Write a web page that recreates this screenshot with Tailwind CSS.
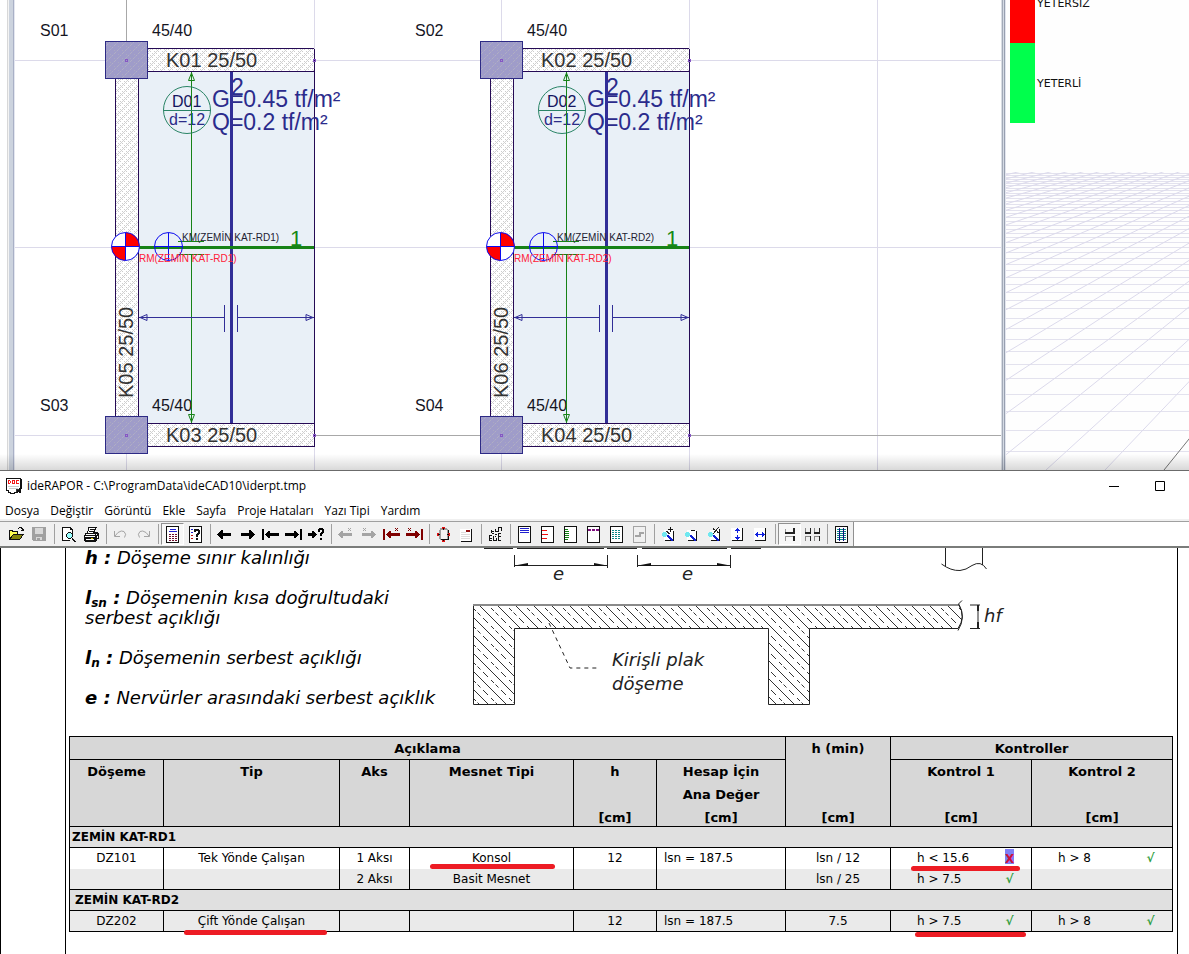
<!DOCTYPE html>
<html lang="tr">
<head>
<meta charset="utf-8">
<meta name="viewport" content="width=device-width, initial-scale=1">
<title>ideRAPOR - C:\ProgramData\ideCAD10\iderpt.tmp</title>
<script src="https://cdn.jsdelivr.net/npm/@tailwindcss/browser@4"></script>
</head>
<body class="flex min-h-screen flex-col overflow-x-hidden bg-white text-black">

<!-- CAD workspace: plan view and 3D view -->
<section class="relative flex h-[471px] shrink-0 border-b border-[#6b6b6b] bg-white" aria-label="ideCAD">
  <div class="flex w-[15px] shrink-0 pl-[7px]">
    <div class="w-px bg-[#d8d8d8]"></div>
    <div class="w-px bg-[#f4f4f4]"></div>
    <div class="w-1 bg-[#ccd3de]"></div>
    <div class="w-px bg-[#a9b0c6]"></div>
    <div class="w-px bg-[#e4e7f0]"></div>
  </div>

  <svg class="h-full min-w-0 flex-1 font-['Liberation_Sans',Arial,sans-serif]" role="img" aria-label="Kat planı">
    <defs>
      <pattern id="beam" width="16" height="16" patternUnits="userSpaceOnUse">
        <rect width="16" height="16" fill="#fff"/>
        <path d="M-1 9L9 -1M-1 17L17 -1M7 17L17 7" stroke="#d2d2d2" fill="none"/>
        <path d="M0 1.500h16M0 5.500h16M0 9.500h16M0 13.500h16" stroke="#cdcdcd" stroke-dasharray="1 3"/>
        <path d="M2 3.500h14M2 7.500h14M2 11.500h14M2 15.500h14" stroke="#cdcdcd" stroke-dasharray="1 3"/>
      </pattern>
      <pattern id="column" width="8" height="8" patternUnits="userSpaceOnUse">
        <rect width="8" height="8" fill="#9f9cc9"/>
        <path d="M-1 9L9 -1" stroke="#b0aec4" stroke-width="1" stroke-dasharray="3 1"/>
        <path d="M2 2.500h1M6 6.500h1" stroke="#aaa8c0"/>
      </pattern>
      <g id="unit">
        <rect x="139" y="72" width="175" height="351" fill="#e9f0f7"/>
        <g shape-rendering="crispEdges">
          <rect x="115" y="72" width="24" height="350" fill="url(#beam)"/>
          <rect x="140" y="48" width="174" height="24" fill="url(#beam)"/>
          <rect x="140" y="423" width="174" height="24" fill="url(#beam)"/>
          <path d="M115.500 78V418M138.500 71.500V423.500M147 48.500H314M138 71.500H314M138 423.500H314M147 446.500H315M314.500 49V447" stroke="#250a55" fill="none"/>
          <path d="M105.500 41.500h42v37h-42zM105.500 416.500h42v37h-42z" fill="url(#column)" stroke="#2d2a85"/>
          <path d="M125.500 59.500h2v2h-2zM313.500 59.500h2v2h-2zM125.500 434.500h2v2h-2zM313.500 434.500h2v2h-2z" fill="none" stroke="#8656c4"/>
        </g>
      </g>
      <g id="marks">
        <g shape-rendering="crispEdges" fill="none">
          <path d="M231.500 72V423" stroke="#312e97" stroke-width="3"/>
          <path d="M191.500 72V241.500M178 241.500H204M178 254.500H204M191.500 254.500V423" stroke="#178217"/>
          <path d="M139 247.500H314" stroke="#178217" stroke-width="3"/>
          <path d="M139 317.500H224M224.500 305V332M237.500 305V332M238 317.500H314" stroke="#312e97"/>
        </g>
        <path d="M191.500 73L188.500 80.500H194.500ZM191.500 422L188.500 414.500H194.500Z" fill="none" stroke="#178217"/>
        <path d="M140 317.500L147 314.500V320.500ZM313 317.500L306 314.500V320.500Z" fill="none" stroke="#312e97"/>
        <circle cx="187" cy="110" r="23.500" fill="none" stroke="#2a8466"/>
        <path d="M163.500 110.500H210.500" stroke="#2a8466" shape-rendering="crispEdges"/>
        <path d="M125.500 246.500V232.500A14 14 0 0 1 139.500 246.500ZM125.500 246.500V260.500A14 14 0 0 1 111.500 246.500Z" fill="#f00"/>
        <path d="M125.500 246.500H111.500A14 14 0 0 1 125.500 232.500ZM125.500 246.500H139.500A14 14 0 0 1 125.500 260.500Z" fill="#fff"/>
        <path d="M111.500 246.500H139.500M125.500 232.500V260.500M154 246.500H183M168.500 232.500V260.500" stroke="#0a0af0"/>
        <circle cx="125.500" cy="246.500" r="14" fill="none" stroke="#0a0af0"/>
        <circle cx="168.500" cy="246.500" r="14" fill="none" stroke="#0a0af0"/>
      </g>
    </defs>

    <g transform="translate(-15 0)">
      <g shape-rendering="crispEdges" stroke="#dcdaea">
        <path d="M126.500 0V470M314.500 0V470M501.500 0V470M689.500 0V470M877.500 0V470M15 60.500H4000M15 247.500H4000M15 435.500H4000"/>
        <path d="M126.500 0V42M314 435.500H4000" stroke="#a8a8a8"/>
      </g>
      <use href="#unit"/>
      <use href="#unit" x="375"/>

      <g fill="#15151f" font-size="16">
        <text x="40" y="36">S01</text><text x="152" y="36">45/40</text>
        <text x="415" y="36">S02</text><text x="527" y="36">45/40</text>
        <text x="40" y="411">S03</text><text x="152" y="411">45/40</text>
        <text x="415" y="411">S04</text><text x="527" y="411">45/40</text>
      </g>
      <g fill="#333" font-size="20">
        <text x="166" y="67">K01 25/50</text><text x="541" y="67">K02 25/50</text>
        <text x="166" y="442">K03 25/50</text><text x="541" y="442">K04 25/50</text>
        <text transform="translate(133 398) rotate(-90)">K05 25/50</text>
        <text transform="translate(508 398) rotate(-90)">K06 25/50</text>
      </g>
      <g fill="#15155f" font-size="16">
        <text x="172" y="107">D01</text><text x="547" y="107">D02</text>
        <text x="169" y="125" fill="#2c2c88">d=12</text><text x="544" y="125" fill="#2c2c88">d=12</text>
      </g>
      <g fill="#2b2b8c" font-size="23">
        <text x="212" y="107">G=0.45 tf/m²</text><text x="587" y="107">G=0.45 tf/m²</text>
        <text x="212" y="130">Q=0.2 tf/m²</text><text x="587" y="130">Q=0.2 tf/m²</text>
        <text x="231" y="95">2</text><text x="606" y="95">2</text>
      </g>
      <use href="#marks"/>
      <use href="#marks" x="375"/>
      <g fill="#178a17" font-size="22">
        <text x="290" y="246">1</text><text x="666" y="246">1</text>
      </g>
      <g fill="#222233" font-size="10">
        <text x="182" y="241">KM(ZEMİN KAT-RD1)</text><text x="557" y="241">KM(ZEMİN KAT-RD2)</text>
      </g>
      <g fill="#ff2038" font-size="10">
        <text x="139" y="262">RM(ZEMİN KAT-RD1)</text><text x="514" y="262">RM(ZEMİN KAT-RD2)</text>
      </g>
    </g>
  </svg>

  <div class="flex w-[5px] shrink-0" role="separator">
    <div class="w-px bg-[#d9dde4]"></div>
    <div class="w-px bg-[#a3aab8]"></div>
    <div class="w-px bg-[#d5dbe5]"></div>
    <div class="w-px bg-[#98a0b0]"></div>
    <div class="w-px bg-[#e2e5ee]"></div>
  </div>

  <svg class="h-full w-[183px] shrink-0 bg-[#fefefe] font-['DejaVu_Sans',Verdana,sans-serif]" role="img" aria-label="3B görünüm">
    <rect x="4" width="25" height="43" fill="#f00"/>
    <rect x="4" y="43" width="25" height="80" fill="#00ff4c"/>
    <text x="31" y="7" font-size="11" fill="#111">YETERSİZ</text>
    <text x="31" y="87" font-size="11" fill="#111">YETERLİ</text>
    <svg y="172" width="100%" height="299" id="floor"></svg>
  </svg>

  <div class="absolute inset-x-0 bottom-0 h-4 bg-linear-to-b from-transparent to-black/15"></div>
</section>

<!-- Report window -->
<section class="flex grow flex-col bg-white font-['Open_Sans','Noto_Sans',sans-serif] text-xs" aria-label="ideRAPOR">
  <header class="flex h-[29px] items-center justify-between pl-[6px]">
    <div class="flex items-center gap-[5px]">
      <svg class="size-4" viewBox="0 0 16 16" shape-rendering="crispEdges" aria-hidden="true">
        <path d="M0 0h15v1h1v10h-1v4h-2v-1h-1v1H9v1H4v-1H2v-2H0z" fill="#111"/>
        <path d="M1 1h13v9h-1v2h-2v2H8v1H5v-1H3v-2H1z" fill="#fff"/>
        <path d="M2 2h2v1h1v2H4v1H2zM3 3v2h1V3zM6 2h3v4H6zM7 3v2h1V3zM10 2h3v1h-2v2h2v1h-3z" fill="#f21818" fill-rule="evenodd"/>
        <path d="M2 8h11v1H2zM3 10h9v1H3z" fill="#ccc"/>
        <path d="M10 11h3v1h-2v2h-1z" fill="#333"/>
      </svg>
      <h1>ideRAPOR - C:\ProgramData\ideCAD10\iderpt.tmp</h1>
    </div>
    <div class="flex self-stretch pr-[6px]">
      <button type="button" class="flex w-[46px] items-center justify-center" aria-label="Simge durumuna küçült"><svg width="10" height="10" aria-hidden="true"><path d="M0 5.500h10" stroke="#000"/></svg></button>
      <button type="button" class="flex w-[46px] items-center justify-center" aria-label="Ekranı kapla"><svg width="10" height="10" aria-hidden="true"><path d="M.5 .5h9v9h-9z" fill="none" stroke="#000"/></svg></button>
    </div>
  </header>

  <nav class="flex h-[19px] items-center gap-[11px] pt-[3px] pl-[5px]" aria-label="Menü">
    <button type="button">Dosya</button>
    <button type="button">Değiştir</button>
    <button type="button">Görüntü</button>
    <button type="button">Ekle</button>
    <button type="button">Sayfa</button>
    <button type="button">Proje Hataları</button>
    <button type="button">Yazı Tipi</button>
    <button type="button">Yardım</button>
  </nav>

  <div class="h-[29px] shrink-0 border-b-2 border-[#7a7c7a] bg-white">
    <div class="h-[3px] border-b border-[#a0a0a0] bg-[#f0f0f0]"></div>
    <div id="toolbar" role="toolbar" aria-label="Araçlar" class="flex h-[24px] w-[854px] items-center border-r border-[#909090] bg-[#f0f0f0] pl-[5px] [&>button]:flex [&>button]:h-[22px] [&>button]:w-[23px] [&>button]:shrink-0 [&>button]:items-center [&>button]:justify-center [&>i]:mx-auto [&>i]:h-5 [&>i]:w-px [&>i]:bg-[#a0a0a0] [&_svg]:size-[17px] [&_svg]:shrink-0">
      <button type="button" aria-label="Aç"><svg viewBox="0 0 17 17" shape-rendering="crispEdges"><path d="M1 4h4v1h5v3h6v1h-1v1h-1v2h-1v1h-1v1H1z" fill="#111"/><path d="M2 5h2v1h5v2H5v1H4v1H3v1H2z" fill="#ffff50"/><path d="M5 9h9v1h-1v2h-1v1H3v-1h1v-2h1z" fill="#85850a"/><path d="M10 2h1V1h3v1h1v1h1v2h-3V4h1V3h-1V2h-2v1h-1z" fill="#111"/></svg></button>
      <button type="button" aria-label="Kaydet" disabled><svg viewBox="0 0 17 17" shape-rendering="crispEdges"><path d="M1 1h14v14H2v-1H1z" fill="#a0a0a0"/><path d="M4 2h8v6H4zM5 11h6v3H9v-2H6v2H5z" fill="#d8d8d8"/></svg></button>
      <i></i>
      <button type="button" aria-label="Baskı önizleme"><svg viewBox="0 0 17 17" shape-rendering="crispEdges"><path d="M2 1h9v1h1v1h1v5h-1V4h-2V2H3v12h7v1H2z" fill="#111"/><path d="M3 2h7v2h2v10H3z" fill="#fff"/><path d="M8 6h3v1h1v1h1v3h-1v1h-1v1H8v-1H7v-1H6V8h1V7h1z" fill="#111"/><path d="M8 7h3v1h1v3h-1v1H8v-1H7V8h1z" fill="#9ff"/><path d="M12 12h1v1h1v1h1v1h1v1h-2v-1h-1v-1h-1z" fill="#111"/></svg></button>
      <button type="button" aria-label="Yazdır"><svg viewBox="0 0 17 17" shape-rendering="crispEdges"><path d="M5 1h9v1h-1v2h-1v2h3v1h1v6h-2v2h-1v1H2v-1H1V9h1V7h2V5h1z" fill="#111"/><path d="M6 2h6v1h-1v2h-1v2H5V5h1z" fill="#fff"/><path d="M3 8h9v1H3zM2 10h10v1H2zM3 13h8v1H3zM13 8h1v1h-1zM14 10h1v2h-1z" fill="#fff"/><path d="M7 3h4v1H7zM6 5h4v1H6z" fill="#111"/><path d="M8 12h2v1H8z" fill="#e8d800"/></svg></button>
      <i></i>
      <button type="button" aria-label="Geri al" disabled><svg viewBox="0 0 17 17" fill="none" stroke="#a4a4a4"><path d="M2.500 5v5.500H8M3 10L6 6.500Q9.500 4 12 5.500Q15 8 12.500 11.500"/></svg></button>
      <button type="button" aria-label="Yinele" disabled><svg viewBox="0 0 17 17" fill="none" stroke="#a4a4a4"><path d="M14.500 5v5.500H9M14 10L11 6.500Q7.500 4 5 5.500Q2 8 4.500 11.500"/></svg></button>
      <i></i>
      <button type="button" aria-label="Sayfa düzeni" aria-pressed="true" class="border border-r-white border-b-white border-t-[#909090] border-l-[#909090] bg-[#f7f7f7]"><svg viewBox="0 0 17 17" shape-rendering="crispEdges"><path d="M2 0h13v17H2z" fill="#111"/><path d="M3 1h11v15H3z" fill="#fff"/><path d="M6 3.500h6M5 5.500h8" stroke="#2020d0"/><path d="M5 8.500h8M5 10.500h8M5 12.500h8M5 14.500h8" stroke="#701030" stroke-dasharray="2 1"/></svg></button>
      <button type="button" aria-label="Sayfa yardımı"><svg viewBox="0 0 17 17" shape-rendering="crispEdges"><path d="M2 0h13v17H2z" fill="#111"/><path d="M3 1h11v15H3z" fill="#fff"/><path d="M4 3.500h2M4 6.500h2" stroke="#2020d0"/><path d="M4 9.500h2M4 12.500h2" stroke="#c01010"/><path d="M7 3h5v1h1v4h-1v1h-1v2H9V8h1V7h1V5H9v1H7zM9 12h2v2H9z" fill="#111"/></svg></button>
      <i></i>
      <button type="button" aria-label="Önceki"><svg viewBox="0 0 17 17" shape-rendering="crispEdges"><path d="M1 8h1V7h1V6h1V5h1V4h2v3h8v3H7v3H5v-1H4v-1H3v-1H2V9H1z" fill="#000"/></svg></button>
      <button type="button" aria-label="Sonraki"><svg viewBox="0 0 17 17" shape-rendering="crispEdges"><path d="M16 8h-1V7h-1V6h-1V5h-1V4h-2v3H2v3h8v3h2v-1h1v-1h1v-1h1V9h1z" fill="#000"/></svg></button>
      <button type="button" aria-label="İlk"><svg viewBox="0 0 17 17" shape-rendering="crispEdges"><path d="M0 3h2v11H0zM3 8h1V7h1V6h1V5h2v2h9v3H8v2H6v-1H5v-1H4V9H3z" fill="#000"/></svg></button>
      <button type="button" aria-label="Son"><svg viewBox="0 0 17 17" shape-rendering="crispEdges"><path d="M15 3h2v11h-2zM14 8h-1V7h-1V6h-1V5H9v2H0v3h9v2h2v-1h1v-1h1V9h1z" fill="#000"/></svg></button>
      <button type="button" aria-label="Sayfaya git"><svg viewBox="0 0 17 17" shape-rendering="crispEdges"><path d="M9 8H8V7H7V6H6V5H4v2H0v3h4v2h2v-1h1v-1h1V9h1zM10 3h1V2h4v1h1v4h-1v1h-1v2h-2V7h1V6h1V4h-2v2h-2zM12 12h2v2h-2z" fill="#000"/></svg></button>
      <i></i>
      <button type="button" aria-label="Önceki hata" disabled><svg viewBox="0 0 17 17" shape-rendering="crispEdges"><path d="M1 8h1V7h1V6h1V5h2v2h9v3H6v2H4v-1H3v-1H2V9H1zM11 2h1v1h1V2h1v1h-1v1h1v1h-1V4h-1v1h-1V4h1V3h-1z" fill="#a4a4a4"/></svg></button>
      <button type="button" aria-label="Sonraki hata" disabled><svg viewBox="0 0 17 17" shape-rendering="crispEdges"><path d="M16 8h-1V7h-1V6h-1V5h-2v2H2v3h9v2h2v-1h1v-1h1V9h1zM3 2h1v1h1V2h1v1H5v1h1v1H5V4H4v1H3V4h1V3H3z" fill="#a4a4a4"/></svg></button>
      <button type="button" aria-label="İlk hata"><svg viewBox="0 0 17 17" shape-rendering="crispEdges"><path d="M0 3h2v11H0zM3 8h1V7h1V6h1V5h2v2h9v3H8v2H6v-1H5v-1H4V9H3zM12 2h1v1h1V2h1v1h-1v1h1v1h-1V4h-1v1h-1V4h1V3h-1z" fill="#800000"/></svg></button>
      <button type="button" aria-label="Son hata"><svg viewBox="0 0 17 17" shape-rendering="crispEdges"><path d="M15 3h2v11h-2zM14 8h-1V7h-1V6h-1V5H9v2H0v3h9v2h2v-1h1v-1h1V9h1zM2 2h1v1h1V2h1v1H4v1h1v1H4V4H3v1H2V4h1V3H2z" fill="#800000"/></svg></button>
      <i></i>
      <button type="button" aria-label="Tümünü seç"><svg viewBox="0 0 17 17" shape-rendering="crispEdges"><path d="M5 2h7v1h1v1h1v9h-1v1H5v-1H4V4h1z" fill="#a0a0a0"/><path d="M6 4h6v9H6z" fill="#f4f4f4"/><path d="M13 4h1v10H6v-1h7z" fill="#111"/><path d="M7 1h3v2H7zM7 14h3v2H7zM2 7h2v3H2zM13 7h2v3h-2z" fill="#e01010"/><path d="M8 2h1v2H8zM8 13h1v2H8zM3 8h2v1H3zM12 8h2v1h-2z" fill="#111"/></svg></button>
      <button type="button" aria-label="Sayfa numarası"><svg viewBox="0 0 17 17" shape-rendering="crispEdges"><path d="M2 3h11v12H2z" fill="#fff"/><path d="M13 3h1v13H3v-1h10z" fill="#111"/><path d="M3 6.500h5M3 8.500h9M3 10.500h9M3 12.500h9" stroke="#ddd"/><path d="M8 4h4v2H8z" fill="#901010"/></svg></button>
      <i></i>
      <button type="button" aria-label="Formül"><svg viewBox="0 0 17 17" shape-rendering="crispEdges" fill="none" stroke="#111"><path d="M2 9.500h3M2 12h3M2 14.500h3M2.500 9v6M4 4v3M4 5.500h3M6.500 7.500h-2M8.500 3V5.500h2.500V1.500h3V5M8 8.500h2M8 10.500h1M11 8v3M14 7.500h-3M14 10.500h-3v4h3M6.500 10v5M6 14.500h4M9.500 12v3"/></svg></button>
      <i></i>
      <button type="button" aria-label="Üst bilgi"><svg viewBox="0 0 17 17" shape-rendering="crispEdges"><path d="M2.500 .5h12v16h-12z" fill="#fff" stroke="#111"/><path d="M4 2.500h9M4 4.500h9M4 6.500h9" stroke="#2020d0"/></svg></button>
      <button type="button" aria-label="Sol kenar"><svg viewBox="0 0 17 17" shape-rendering="crispEdges"><path d="M2.500 .5h12v16h-12z" fill="#fff" stroke="#111"/><path d="M3 4.500h5M3 8.500h6M3 12.500h5" stroke="#f01010"/></svg></button>
      <button type="button" aria-label="Cetvel"><svg viewBox="0 0 17 17" shape-rendering="crispEdges"><path d="M2.500 .5h12v16h-12z" fill="#fff" stroke="#111"/><path d="M3 3.500h3M3 5.500h4M3 7.500h4M3 9.500h4M3 11.500h4M3 13.500h3" stroke="#108010"/></svg></button>
      <button type="button" aria-label="Sayfa sonu"><svg viewBox="0 0 17 17" shape-rendering="crispEdges"><path d="M2.500 .5h12v16h-12z" fill="#fff" stroke="#111"/><path d="M3 4h11" stroke="#801080" stroke-width="2" stroke-dasharray="3 1"/></svg></button>
      <button type="button" aria-label="Izgara"><svg viewBox="0 0 17 17" shape-rendering="crispEdges"><path d="M2.500 .5h12v16h-12z" fill="#fff" stroke="#111"/><path d="M4 4.500h9M4 6.500h9M4 8.500h9M4 10.500h9M4 12.500h9" stroke="#0b8a8a" stroke-dasharray="2 1"/></svg></button>
      <button type="button" aria-label="Grafik" disabled><svg viewBox="0 0 17 17" shape-rendering="crispEdges"><path d="M2.500 .5h12v16h-12z" fill="#f0f0f0" stroke="#a4a4a4"/><path d="M4 9h4V6h5v2h-3v3H4z" fill="#a4a4a4"/></svg></button>
      <i></i>
      <button type="button" aria-label="Yakınlaştır"><svg viewBox="0 0 17 17" shape-rendering="crispEdges"><path d="M13 5h1v10H5v-1h8z" fill="#111"/><path d="M4 4h9v10H4z" fill="#fff"/><path d="M3 6h3v1h1v3H6v1H3v-1H2V7h1z" fill="#70e8f0"/><path d="M7 9h2v1h1v1h1v1h1v1h1v2h-2v-1h-1v-1H9v-1H8v-1H7z" fill="#1020d0"/><path d="M6 5h2v1h1v1h1v1H8V7H7V6H6z" fill="#222"/><path d="M10.500 1v5M8 3.500h5" stroke="#111"/></svg></button>
      <button type="button" aria-label="Uzaklaştır"><svg viewBox="0 0 17 17" shape-rendering="crispEdges"><path d="M13 5h1v10H5v-1h8z" fill="#111"/><path d="M4 4h9v10H4z" fill="#fff"/><path d="M3 6h3v1h1v3H6v1H3v-1H2V7h1z" fill="#70e8f0"/><path d="M7 9h2v1h1v1h1v1h1v1h1v2h-2v-1h-1v-1H9v-1H8v-1H7z" fill="#1020d0"/><path d="M8 4.500h4" stroke="#111"/></svg></button>
      <button type="button" aria-label="Yüzde"><svg viewBox="0 0 17 17" shape-rendering="crispEdges"><path d="M13 3h1v12H5v-1h8z" fill="#111"/><path d="M4 4h9v10H4z" fill="#fff"/><path d="M3 6h3v1h1v3H6v1H3v-1H2V7h1z" fill="#70e8f0"/><path d="M7 9h2v1h1v1h1v1h1v1h1v2h-2v-1h-1v-1H9v-1H8v-1H7z" fill="#1020d0"/><path d="M7 8L13 1M7 3.500h2M7.500 2v2M11 6.500h2M11.500 5v2" fill="none" stroke="#222"/></svg></button>
      <button type="button" aria-label="Sayfa boyu"><svg viewBox="0 0 17 17" shape-rendering="crispEdges"><path d="M2 2h11v12H2z" fill="#fff"/><path d="M13 2h1v13H3v-1h10z" fill="#111"/><path d="M8 2h1v1h1v1h1v1H9v2H8V5H6V4h1V3h1zM8 9h1v2h2v1h-1v1H9v1H8v-1H7v-1H6v-1h2z" fill="#1020e0"/></svg></button>
      <button type="button" aria-label="Sayfa eni"><svg viewBox="0 0 17 17" shape-rendering="crispEdges"><path d="M2 2h11v12H2z" fill="#fff"/><path d="M13 2h1v13H3v-1h10z" fill="#111"/><path d="M3 8h1V7h1V6h1v2h2v1H6v2H5v-1H4V9H3zM13 8h-1V7h-1V6h-1v2H8v1h2v2h1v-1h1V9h1z" fill="#1020e0"/></svg></button>
      <i></i>
      <button type="button" aria-label="Tek sayfa" aria-pressed="true" class="border border-r-white border-b-white border-t-[#909090] border-l-[#909090] bg-[#f7f7f7]"><svg viewBox="0 0 17 17" shape-rendering="crispEdges" fill="none"><path d="M4.500 3V7M4.500 15V10.500h8" stroke="#999"/><path d="M4 7h9M13 2V8M13 10V15" stroke="#222" stroke-width="2"/></svg></button>
      <button type="button" aria-label="Çift sayfa"><svg viewBox="0 0 17 17" shape-rendering="crispEdges" fill="none"><path d="M1.500 2V7M1.500 15V10.500h5M10.500 2V7M10.500 15V10.500h5" stroke="#888"/><path d="M1 7h6M10 7h6" stroke="#222" stroke-width="2"/><path d="M6.500 2V7M6.500 10V15M15.500 2V7M15.500 10V15" stroke="#222"/></svg></button>
      <i></i>
      <button type="button" aria-label="Tablo"><svg viewBox="0 0 17 17" shape-rendering="crispEdges"><path d="M2.500 .5h12v16h-12z" fill="#fff" stroke="#111"/><path d="M4 3.500h9M4 5.500h9M4 7.500h9M4 9.500h9M4 11.500h9M4 13.500h9" stroke="#0b8a8a"/><path d="M6.500 2v13M10.500 2v13" stroke="#101080"/></svg></button>
    </div>
  </div>

  <main class="flex grow border-l border-black bg-white pr-[11px] pl-[64px] font-['DejaVu_Sans',Verdana,sans-serif]">
    <article class="min-w-0 grow border-x border-black pr-[4px] pl-[3px]">
      <div class="flex h-[188px] overflow-hidden">
        <div class="w-[397px] shrink-0 pl-[16px] text-[18px] leading-5 italic">
          <p><b>h :</b> Döşeme sınır kalınlığı</p>
          <p class="mt-5"><b>l<sub class="text-xs">sn</sub> :</b> Döşemenin kısa doğrultudaki<br>serbest açıklığı</p>
          <p class="mt-5"><b>l<sub class="text-xs">n</sub> :</b> Döşemenin serbest açıklığı</p>
          <p class="mt-5 whitespace-nowrap"><b>e :</b> Nervürler arasındaki serbest açıklık</p>
        </div>

        <svg class="h-full min-w-0 grow" role="img" aria-label="Kirişli plak döşeme kesiti">
          <defs>
            <pattern id="hatch" width="18" height="18" patternUnits="userSpaceOnUse">
              <path d="M-1 -1L19 19" stroke="#333" fill="none"/>
              <path d="M9.500 .5l3 3M15 6l3 3M0 9l2 2M5 14l3 3" stroke="#333" fill="none"/>
            </pattern>
          </defs>
          <g transform="translate(-466 -548)" fill="none" stroke="#222">
            <path d="M484 548.500H513M517 548.500H604M607 548.500H637M642 548.500H727M731 548.500H761"/>
            <path d="M514.500 555V567M607.500 555V568M514 565.500H607M637.500 555V567M730.500 555V568M638 565.500H730"/>
            <path d="M515 565.500L528 563V566ZM607 565.500L594 563V566ZM638 565.500L651 563V566ZM730 565.500L717 563V566Z" fill="#111" stroke="none"/>
            <path d="M945.500 548V566M982.500 548V565M941.500 564Q951 571 960 570.500Q966 570 972 565.500Q981 560 986.500 569"/>
            <path d="M473.500 604.500H959Q966 617 958 628.500H809.500V704.500H768.500V628.500H514.500V704.500H473.500Z" fill="url(#hatch)"/>
            <path d="M473 605H959" stroke="#8a8a8a" stroke-width="2"/>
            <path d="M962 600.500L958.500 604Q966.500 617 958 630.500"/>
            <path d="M549 623L570 668H600" stroke-dasharray="4 4"/>
            <path d="M970 605H980M970 628.500H980M978 605V628" stroke="#222"/>
            <path d="M978 605V611M978 622V628" stroke-width="2"/>
            <g fill="#222" stroke="none" font-size="18" font-style="italic">
              <text x="553" y="580">e</text><text x="682" y="580">e</text>
              <text x="612" y="666">Kirişli plak</text><text x="612" y="690">döşeme</text>
              <text x="984" y="622">hf</text>
            </g>
          </g>
        </svg>
      </div>

      <table class="w-full table-fixed border-collapse border border-black text-center text-xs [&_tbody_td]:h-[21px] [&_td]:border-x [&_td]:border-black [&_td]:p-0 [&_th]:border [&_th]:border-black [&_th]:p-0 [&_thead_th]:align-top [&_thead_th]:text-[13px] [&_thead_th]:leading-[23px]">
        <colgroup>
          <col class="w-[94px]"><col class="w-[176px]"><col class="w-[70px]"><col class="w-[164px]"><col class="w-[83px]"><col class="w-[129px]"><col class="w-[105px]"><col class="w-[141px]"><col class="w-[141px]">
        </colgroup>
        <thead class="bg-[#d7d7d7]">
          <tr>
            <th colspan="6" scope="colgroup"><div class="h-[22px]">Açıklama</div></th>
            <th rowspan="2" scope="col"><div class="h-[89px]">h (min)<br><br><br>[cm]</div></th>
            <th colspan="2" scope="colgroup"><div class="h-[22px]">Kontroller</div></th>
          </tr>
          <tr>
            <th scope="col"><div class="h-[66px]">Döşeme</div></th>
            <th scope="col">Tip</th>
            <th scope="col">Aks</th>
            <th scope="col">Mesnet Tipi</th>
            <th scope="col"><div class="h-[66px]">h<br><br>[cm]</div></th>
            <th scope="col"><div class="h-[66px]">Hesap İçin<br>Ana Değer<br>[cm]</div></th>
            <th scope="col"><div class="h-[66px]">Kontrol 1<br><br>[cm]</div></th>
            <th scope="col"><div class="h-[66px]">Kontrol 2<br><br>[cm]</div></th>
          </tr>
        </thead>
        <tbody>
          <tr class="bg-[#e0e0e0]"><th colspan="9" scope="rowgroup" class="text-left"><div class="h-5 pl-[2px] leading-5">ZEMİN KAT-RD1</div></th></tr>
          <tr>
            <td>DZ101</td><td>Tek Yönde Çalışan</td><td>1 Aksı</td>
            <td class="relative">Konsol<span class="absolute top-[16px] left-5 h-[5px] w-[125px] rounded-full bg-[#ed1c24]"></span></td>
            <td>12</td><td><div class="pl-[7px] text-left">lsn = 187.5</div></td><td>lsn / 12</td>
            <td class="relative"><div class="flex items-center justify-between pr-[17px] pl-[26px]"><span>h &lt; 15.6</span><span class="mb-1 h-[15px] w-[9px] bg-[#7f7ff5] leading-[20px] font-bold text-[#d0103a]">X</span></div><span class="absolute top-[18px] left-5 h-[5px] w-[109px] rounded-full bg-[#ed1c24]"></span></td>
            <td><div class="flex justify-between pr-[17px] pl-[26px]"><span>h &gt; 8</span><span class="w-[9px] font-bold text-[#2e9e3c]">√</span></div></td>
          </tr>
          <tr class="bg-[#eaeaea]">
            <td></td><td></td><td>2 Aksı</td><td>Basit Mesnet</td><td></td><td></td><td>lsn / 25</td>
            <td><div class="flex justify-between pr-[17px] pl-[26px]"><span>h &gt; 7.5</span><span class="w-[9px] font-bold text-[#2e9e3c]">√</span></div></td><td></td>
          </tr>
        </tbody>
        <tbody>
          <tr class="bg-[#e0e0e0]"><th colspan="9" scope="rowgroup" class="text-left"><div class="h-5 pl-[5px] leading-5">ZEMİN KAT-RD2</div></th></tr>
          <tr class="bg-[#eaeaea]">
            <td>DZ202</td>
            <td class="relative">Çift Yönde Çalışan<span class="absolute top-[19px] left-5 h-[5px] w-[143px] rounded-full bg-[#ed1c24]"></span></td>
            <td></td><td></td><td>12</td><td><div class="pl-[7px] text-left">lsn = 187.5</div></td><td>7.5</td>
            <td class="relative"><div class="flex justify-between pr-[17px] pl-[26px]"><span>h &gt; 7.5</span><span class="w-[9px] font-bold text-[#2e9e3c]">√</span></div><span class="absolute top-[21px] left-6 h-[5px] w-[111px] rounded-full bg-[#ed1c24]"></span></td>
            <td><div class="flex justify-between pr-[17px] pl-[26px]"><span>h &gt; 8</span><span class="w-[9px] font-bold text-[#2e9e3c]">√</span></div></td>
          </tr>
        </tbody>
      </table>
    </article>
  </main>
</section>

<script>
// Perspective ground grid: rows recede towards the horizon, rays meet at the vanishing point.
(function () {
  var floor = document.getElementById('floor');
  var horizon = -112, vanishX = 489;
  function line(x1, y1, x2, y2, colour) {
    var el = document.createElementNS('http://www.w3.org/2000/svg', 'line');
    el.setAttribute('x1', x1); el.setAttribute('y1', y1);
    el.setAttribute('x2', x2); el.setAttribute('y2', y2);
    el.setAttribute('stroke', colour);
    floor.appendChild(el);
  }
  for (var n = 0; n <= 43; n++) {
    var y = Math.round(horizon + 1 / (0.002558 + 0.0001467 * n)) + 0.5;
    line(0, y, 2000, y, '#e3e2ee');
  }
  for (var k = 0; k <= 26; k++) {
    line(vanishX, horizon, 158 - 59 * k, 298, k ? '#dcdaec' : '#777');
  }
})();
</script>
</body>
</html>
